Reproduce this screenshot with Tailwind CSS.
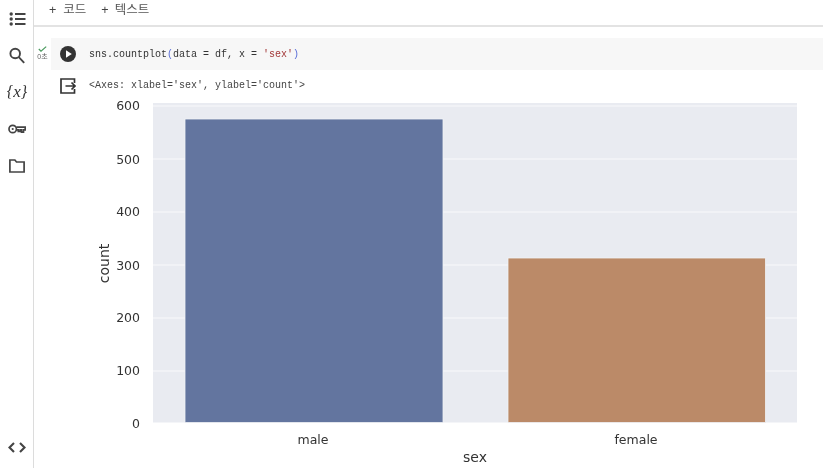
<!DOCTYPE html>
<html>
<head>
<meta charset="utf-8">
<script src="https://cdn.jsdelivr.net/npm/@tailwindcss/browser@4"></script>
</head>
<body class="bg-white overflow-hidden">
<div class="flex w-[823px] h-[468px] overflow-hidden blur-[0.35px] font-['Liberation_Sans','Noto_Sans_CJK_KR',sans-serif]">
  <aside class="w-[34px] shrink-0 border-r border-[#dcdcdc] flex flex-col items-center pl-[1px] text-[#444746]">
    <svg class="mt-[11px]" width="17" height="16" viewBox="0 0 17 16" fill="none" stroke="#444" ><g stroke-width="1.800"><path d="M6 3h10.500M6 8h10.500M6 13h10.500"/></g><g fill="#444" stroke="none"><circle cx="2.200" cy="3" r="1.700"/><circle cx="2.200" cy="8" r="1.700"/><circle cx="2.200" cy="13" r="1.700"/></g></svg>
    <svg class="mt-[20px]" width="16" height="17" viewBox="0 0 16 17" fill="none" stroke="#444" stroke-width="1.900"><circle cx="6.200" cy="6.500" r="4.800"/><path d="M9.800 10.200l5.400 5.600"/></svg>
    <div class="mt-[18px] h-[19px] leading-[19px] text-[16px] text-[#333] font-['Liberation_Serif',serif] italic whitespace-nowrap">{<span class="text-[17px]">x</span>}</div>
    <svg class="mt-[23px]" width="18" height="10" viewBox="0 0 18 10" fill="none" stroke="#444" stroke-width="1.700"><circle cx="4.700" cy="5" r="3.700"/><circle cx="4.700" cy="5" r="1.100" fill="#444" stroke="none"/><path d="M8.400 3.200h8.800v2.600h-1.700v2.400h-2V5.800h-1.300v1.600H10.300V5.800H8.400"/></svg>
    <svg class="mt-[25px]" width="16" height="14" viewBox="0 0 16 14" fill="none" stroke="#444" stroke-width="1.700"><path d="M.9 1h5l1.600 2h7.600v10H.9z"/></svg>
    <svg class="mt-auto mb-[15px]" width="18" height="11" viewBox="0 0 18 11" fill="none" stroke="#444" stroke-width="2.100"><path d="M6 1L1.500 5.500 6 10M12 1l4.500 4.500L12 10"/></svg>
  </aside>
  <main class="flex-1 min-w-0 flex flex-col">
    <div class="h-[27px] shrink-0 border-b-2 border-[#e3e3e3] flex items-start gap-[15px] pl-[15px] pt-[3px] text-[12.500px] leading-[14px] text-[#555]">
      <span class="whitespace-nowrap"><span class="text-[#444] mr-[7px]">+</span>코드</span>
      <span class="whitespace-nowrap"><span class="text-[#444] mr-[6px]">+</span>텍스트</span>
    </div>
    <div class="mt-[11px] flex h-[32px] shrink-0">
      <div class="w-[17px] shrink-0 flex flex-col items-center pt-[8px]">
        <svg width="9" height="6" viewBox="0 0 9 6" fill="none" stroke="#4a9a5e" stroke-width="1.200"><path d="M.8 3l2.200 2.200L8.200.6"/></svg>
        <span class="text-[7px] leading-[9px] text-[#666]">0초</span>
      </div>
      <div class="flex-1 bg-[#f7f7f7] flex items-center pl-[9px]">
        <svg width="16" height="16" viewBox="0 0 16 16"><circle cx="8" cy="8" r="8" fill="#333"/><path d="M6 4.300v7.400l5.800-3.700z" fill="#fff"/></svg>
        <code class="ml-[13px] pt-[1px] text-[10px] leading-[14px] font-['Liberation_Mono',monospace] text-[#333] whitespace-pre">sns.countplot<span class="text-[#5b6fd8]">(</span>data = df, x = <span class="text-[#a33a3a]">'sex'</span><span class="text-[#5b6fd8]">)</span></code>
      </div>
    </div>
    <div class="flex flex-col">
      <div class="flex items-center h-[31px] shrink-0 pl-[26px]">
        <svg width="16" height="16" viewBox="0 0 16 16" fill="none" stroke="#333" stroke-width="1.700"><path d="M14.500 5V1H1v14h13.500v-4"/><path d="M5.500 8H15M11.500 4.500L15 8l-3.500 3.500"/></svg>
        <code class="ml-[13px] text-[10px] leading-[14px] font-['Liberation_Mono',monospace] text-[#444] whitespace-pre">&lt;Axes: xlabel='sex', ylabel='count'&gt;</code>
      </div>
      <svg class="-mt-[5px] block" width="789" height="370" viewBox="34 96 789 370" font-family="DejaVu Sans" font-size="12.500" fill="#333">
        <rect x="153" y="103" width="644" height="319.500" fill="#e9ebf1"/>
        <g stroke="#f4f5f8" stroke-width="1.300">
          <path d="M153 106H797M153 159H797M153 212H797M153 265H797M153 318H797M153 371H797"/>
        </g>
        <rect x="185" y="119" width="258" height="303.500" fill="#63759f" stroke="#f1f2f6" stroke-width=".8"/>
        <rect x="508" y="258" width="257.500" height="164.500" fill="#bb8a68" stroke="#f1f2f6" stroke-width=".8"/>
        <g text-anchor="end">
          <text x="140" y="110">600</text><text x="140" y="163.500">500</text><text x="140" y="216">400</text><text x="140" y="269.500">300</text><text x="140" y="322">200</text><text x="140" y="375">100</text><text x="140" y="428">0</text>
        </g>
        <g text-anchor="middle">
          <text x="313" y="444">male</text><text x="636" y="444">female</text>
          <text x="475" y="462" font-size="14">sex</text>
          <text transform="translate(109 263.500) rotate(-90)" font-size="14">count</text>
        </g>
      </svg>
    </div>
  </main>
</div>
</body>
</html>
